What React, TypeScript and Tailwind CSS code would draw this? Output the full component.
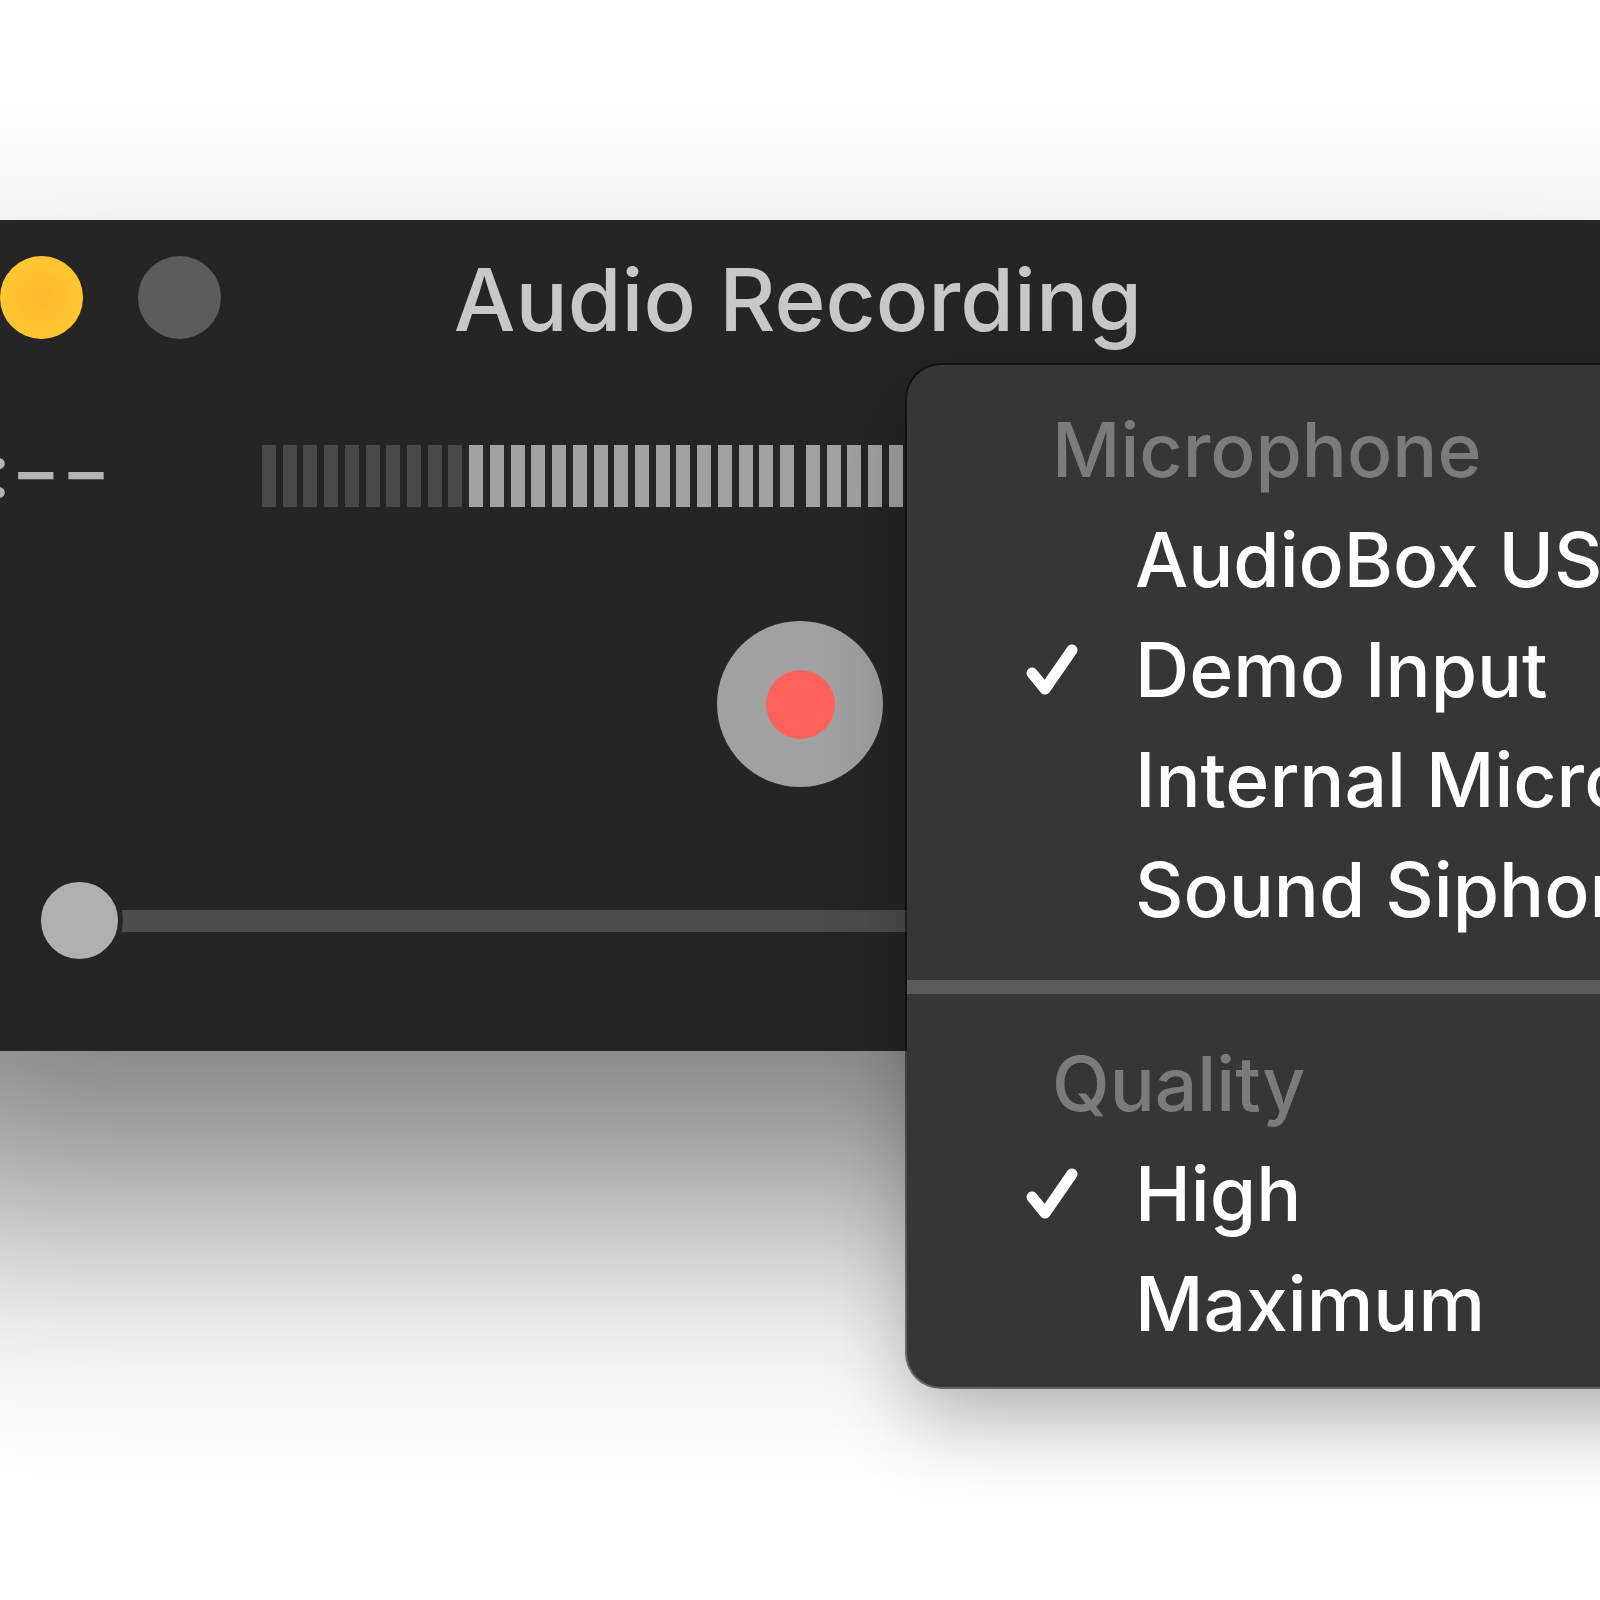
const GROUPS = [0, 1];
const BARS_PER_GROUP = 26;
const IDLE_BARS = 10;

const SECTIONS = [
  {
    title: "Microphone",
    selected: "Demo Input",
    items: ["AudioBox USB", "Demo Input", "Internal Microphone", "Sound Siphon"],
  },
  { title: "Quality", selected: "High", items: ["High", "Maximum"] },
];

function CheckMark() {
  return (
    <svg viewBox="0 0 52 52" className="h-[52px] w-[52px]" fill="none" stroke="currentColor" strokeWidth="11" strokeLinecap="round" aria-hidden="true">
      <path d="M6 29 L19 45 L46 6" strokeLinejoin="round" />
    </svg>
  );
}

function LevelMeter() {
  return (
    <div role="img" aria-label="Input level" className="flex h-[62px] flex-1 gap-3">
      {GROUPS.map((group) => (
        <div key={group} className="flex flex-1 justify-between">
          {Array.from({ length: BARS_PER_GROUP }, (_, i) => (
            <span
              key={i}
              className={group === 0 && i < IDLE_BARS ? "w-[14px] bg-[#494949]" : "w-[14px] bg-[#a2a2a2]"}
            />
          ))}
        </div>
      ))}
    </div>
  );
}

function OptionsMenu() {
  return (
    <div
      role="menu"
      aria-label="Recording options"
      className="absolute left-[1094px] top-[145px] w-[900px] rounded-[34px] bg-[#363636] pt-[30px] pb-[28px] text-[75px] leading-[110px] font-[450] shadow-[0_0_0_2px_rgba(0,0,0,0.5),0_34px_80px_rgba(0,0,0,0.27)]"
    >
      {SECTIONS.map((section, index) => (
        <div key={section.title} role="group" aria-label={section.title}>
          {index > 0 && <hr className="my-[35px] h-[14px] border-0 bg-[#5a5a5a]" />}
          <div className="pl-[145px] text-[#7b7b7b]">{section.title}</div>
          {section.items.map((item) => (
            <button
              key={item}
              type="button"
              role="menuitemradio"
              aria-checked={item === section.selected}
              className="flex w-full items-center whitespace-nowrap pl-[119px] text-left text-white"
            >
              <span className="w-[109px] shrink-0">{item === section.selected && <CheckMark />}</span>
              {item}
            </button>
          ))}
        </div>
      ))}
    </div>
  );
}

export default function App() {
  return (
    <main className="min-h-screen overflow-hidden bg-white pt-[220px] font-['Inter',sans-serif]">
      <section
        aria-label="Audio Recording"
        className="relative -mx-[187px] rounded-[34px] bg-[#252525] pb-[86px] shadow-[0_155px_270px_rgba(0,0,0,0.5)]"
      >
        <header className="relative flex h-[154px] items-center gap-[55px] pl-[49px]">
          <button type="button" aria-label="Close" className="h-[83px] w-[83px] rounded-full bg-[#ff625b]" />
          <button type="button" aria-label="Minimize" className="h-[83px] w-[83px] rounded-full bg-[radial-gradient(circle,#ffb92f_0%,#ffc630_70%)]" />
          <button type="button" aria-label="Zoom" className="h-[83px] w-[83px] rounded-full bg-[#5c5c5c]" />
          <h1 className="pointer-events-none absolute inset-0 pr-1 text-center text-[87px] leading-[160px] font-[450] text-[#c8c8c8]">
            Audio Recording
          </h1>
        </header>

        <div className="mt-[71px] flex items-start pr-[449px]">
          <time className="flex w-[449px] shrink-0 justify-end whitespace-nowrap pr-[151px] text-[75px] leading-[50px] font-medium text-[#b4b4b4]">−−:−−</time>
          <LevelMeter />
        </div>

        <div className="mt-[114px] flex justify-center">
          <button type="button" aria-label="Record" className="flex h-[166px] w-[166px] items-center justify-center rounded-full bg-[#a1a1a1]">
            <span className="h-[69px] w-[69px] rounded-full bg-[#ff625b]" />
          </button>
        </div>

        <div className="mt-[90px] mb-px px-[223px]">
          <input
            type="range"
            aria-label="Volume"
            min={0}
            max={100}
            defaultValue={0}
            className="block h-[87px] w-full appearance-none bg-transparent [&::-webkit-slider-runnable-track]:h-[22px] [&::-webkit-slider-runnable-track]:bg-[linear-gradient(to_right,transparent_44px,#4c4c4c_44px)] [&::-webkit-slider-thumb]:mt-[-33px] [&::-webkit-slider-thumb]:h-[87px] [&::-webkit-slider-thumb]:w-[87px] [&::-webkit-slider-thumb]:appearance-none [&::-webkit-slider-thumb]:rounded-full [&::-webkit-slider-thumb]:border-[5px] [&::-webkit-slider-thumb]:border-[#252525] [&::-webkit-slider-thumb]:bg-[#b0b0b0]"
          />
        </div>

        <OptionsMenu />
      </section>
    </main>
  );
}
